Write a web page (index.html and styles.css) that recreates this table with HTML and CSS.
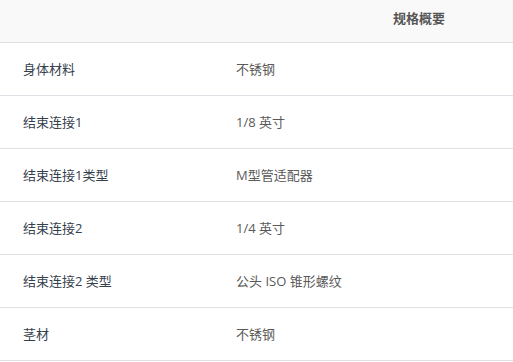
FILE: index.html
```html
<!DOCTYPE html>
<html lang="zh">
<head>
<meta charset="utf-8">
<link rel="stylesheet" href="styles.css">
</head>
<body>
<table class="spec">
  <colgroup>
    <col class="col-label">
    <col class="col-value">
  </colgroup>
  <thead>
    <tr><th class="head-cell" colspan="2"><span>规格概要</span></th></tr>
  </thead>
  <tbody>
    <tr><td class="label">身体材料</td><td class="value">不锈钢</td></tr>
    <tr><td class="label">结束连接1</td><td class="value">1/8 英寸</td></tr>
    <tr><td class="label">结束连接1类型</td><td class="value">M型管适配器</td></tr>
    <tr><td class="label">结束连接2</td><td class="value">1/4 英寸</td></tr>
    <tr><td class="label">结束连接2 类型</td><td class="value">公头 ISO 锥形螺纹</td></tr>
    <tr><td class="label">茎材</td><td class="value">不锈钢</td></tr>
  </tbody>
</table>
</body>
</html>
```
FILE: styles.css
```css
html, body {
  margin: 0;
  padding: 0;
  background: #ffffff;
}
body {
  font-family: "Open Sans", "Noto Sans CJK SC", sans-serif;
  font-size: 13px;
}
.spec {
  width: 100%;
  border-collapse: collapse;
  table-layout: fixed;
}
.col-label {
  width: 236px;
}
.head-cell {
  background: #f9f9f9;
  height: 42px;
  box-sizing: border-box;
  padding: 0 0 6px 393px;
  text-align: left;
  font-weight: bold;
  color: #555555;
  border-bottom: 1px solid #dde1e6;
}
.spec td {
  height: 52px;
  padding: 0;
  border-bottom: 1px solid #dde1e6;
  vertical-align: middle;
}
.spec td.label {
  padding-left: 23px;
  color: #34404c;
}
.value {
  color: #5a5a5a;
}
```
